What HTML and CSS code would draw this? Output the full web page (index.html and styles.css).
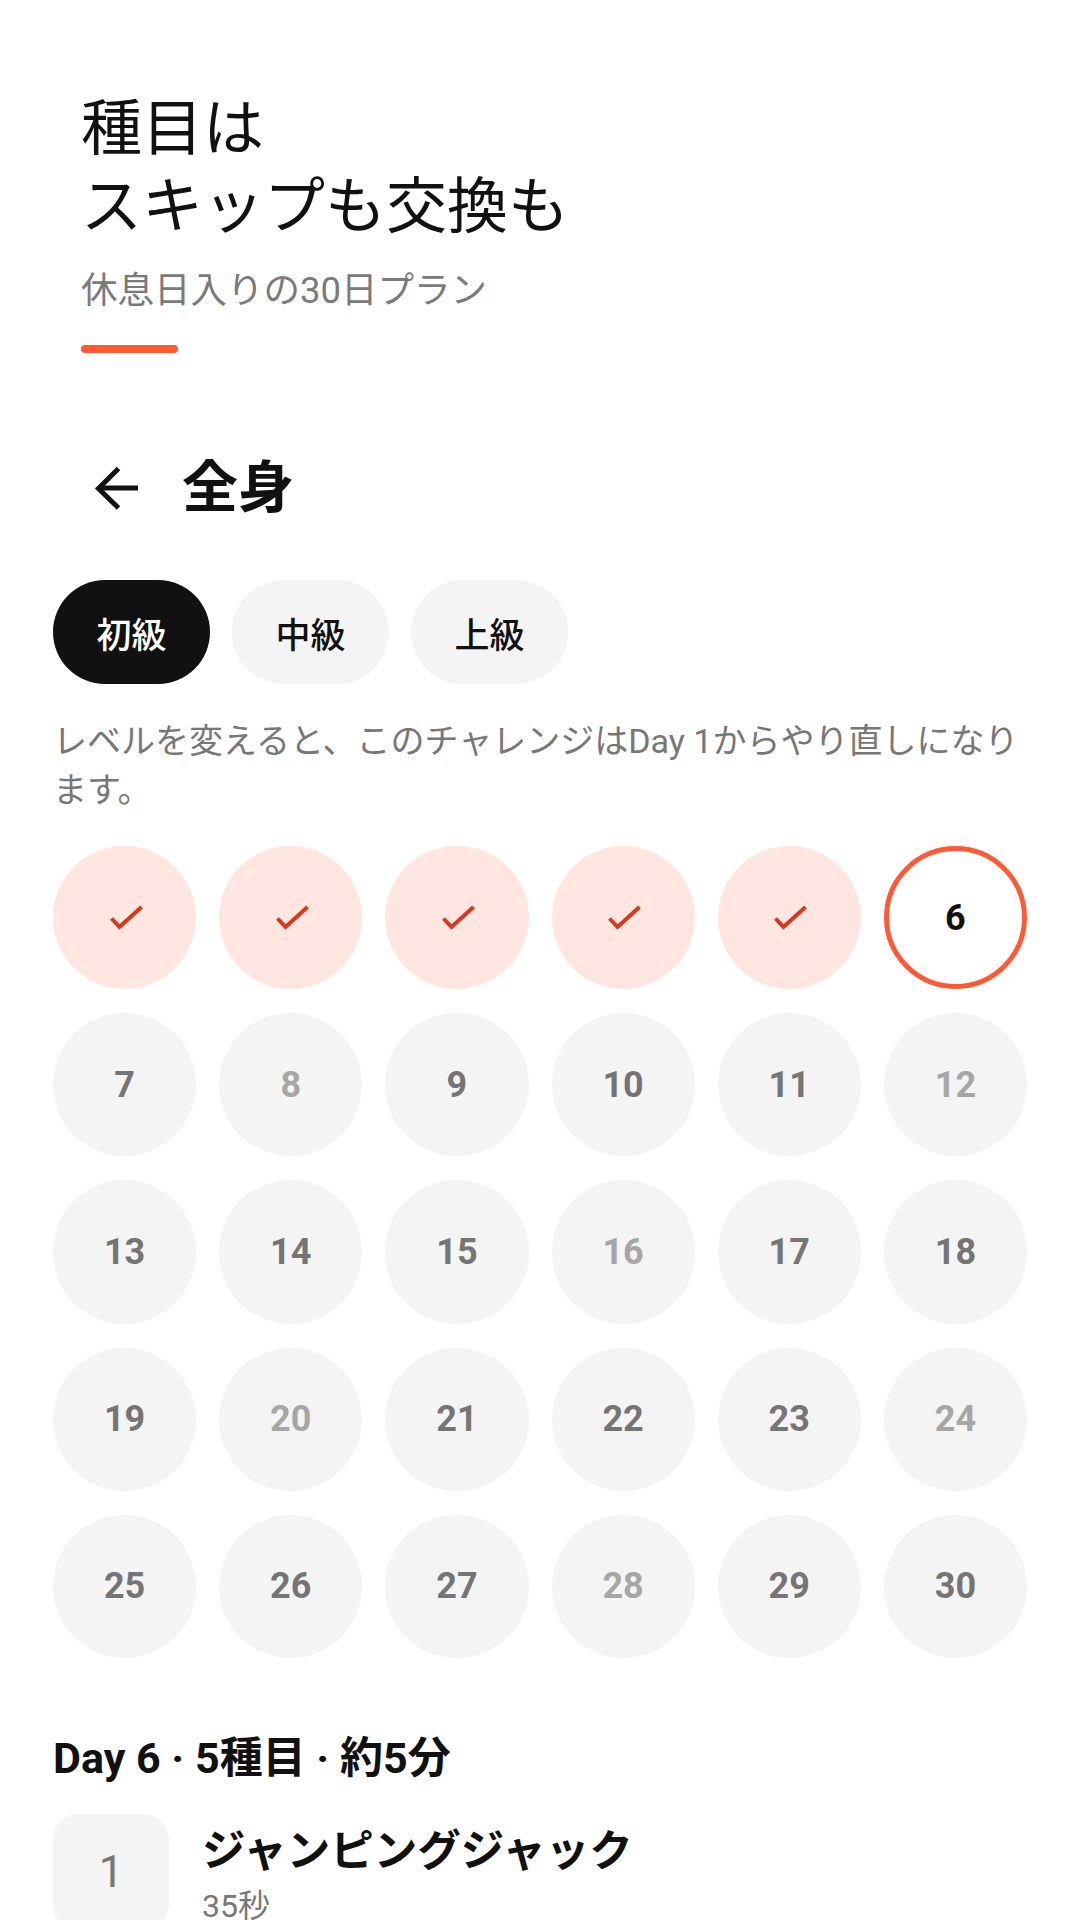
FILE: index.html
```html
<!DOCTYPE html>
<html lang="ja">
<head>
  <meta charset="UTF-8" />
  <meta name="viewport" content="width=device-width, initial-scale=1.0"/>
  <title>全身 30日チャレンジ</title>
  <link rel="stylesheet" href="styles.css">
</head>
<body>

  <header class="hero">
    <h1 class="hero-title">種目は<br>スキップも交換も</h1>
    <p class="hero-sub">休息日入りの30日プラン</p>
    <div class="hero-bar"></div>
  </header>

  <main class="content">
    <div class="topbar">
      <button class="back" aria-label="戻る">
        <svg width="48" height="48" viewBox="0 0 48 48" fill="none" stroke="#111" stroke-width="5">
          <path d="M5 24H45" />
          <path d="M25.5 4.5L5.5 24.5L25.5 44" />
        </svg>
      </button>
      <h2 class="topbar-title">全身</h2>
    </div>

    <div class="levels">
      <button class="chip active">初級</button>
      <button class="chip">中級</button>
      <button class="chip">上級</button>
    </div>

    <p class="note">レベルを変えると、このチャレンジはDay 1からやり直しになります。</p>

    <div class="days">
      <div class="day done"><svg width="40" height="32" viewBox="0 0 40 32"><polyline points="6.5,16.5 14.5,25 36.5,5" /></svg></div>
      <div class="day done"><svg width="40" height="32" viewBox="0 0 40 32"><polyline points="6.5,16.5 14.5,25 36.5,5" /></svg></div>
      <div class="day done"><svg width="40" height="32" viewBox="0 0 40 32"><polyline points="6.5,16.5 14.5,25 36.5,5" /></svg></div>
      <div class="day done"><svg width="40" height="32" viewBox="0 0 40 32"><polyline points="6.5,16.5 14.5,25 36.5,5" /></svg></div>
      <div class="day done"><svg width="40" height="32" viewBox="0 0 40 32"><polyline points="6.5,16.5 14.5,25 36.5,5" /></svg></div>
      <div class="day current">6</div>

      <div class="day">7</div>
      <div class="day rest">8</div>
      <div class="day">9</div>
      <div class="day">10</div>
      <div class="day">11</div>
      <div class="day rest">12</div>

      <div class="day">13</div>
      <div class="day">14</div>
      <div class="day">15</div>
      <div class="day rest">16</div>
      <div class="day">17</div>
      <div class="day">18</div>

      <div class="day">19</div>
      <div class="day rest">20</div>
      <div class="day">21</div>
      <div class="day">22</div>
      <div class="day">23</div>
      <div class="day rest">24</div>

      <div class="day">25</div>
      <div class="day">26</div>
      <div class="day">27</div>
      <div class="day rest">28</div>
      <div class="day">29</div>
      <div class="day">30</div>
    </div>

    <h3 class="plan-title">Day 6 · 5種目 · 約5分</h3>

    <ul class="exercises">
      <li class="exercise">
        <div class="exercise-num">1</div>
        <div class="exercise-info">
          <div class="exercise-name">ジャンピングジャック</div>
          <div class="exercise-time">35秒</div>
        </div>
      </li>
    </ul>
  </main>

</body>
</html>
```

FILE: styles.css
```css
:root {
  --text: #111;
  --muted: #777;
  --faint: #a6a6a6;
  --surface: #f4f4f4;
  --accent: #ff5a36;
  --done-bg: #ffe6e0;
  --done-mark: #d8391e;
}

* {
  box-sizing: border-box;
}

body {
  margin: 0;
  background: #fff;
  color: var(--text);
  font-family: Roboto, "Noto Sans CJK JP", sans-serif;
  overflow: hidden;
}

.hero {
  padding: 85px 81px 0;
}

.hero-title {
  margin: 0;
  font-size: 61px;
  line-height: 78px;
  font-weight: 400;
  font-family: "Noto Sans CJK JP", sans-serif;
}

.hero-sub {
  margin: 26px 0 0;
  font-size: 36.5px;
  line-height: 48px;
  color: #7a7a7a;
}

.hero-bar {
  width: 97px;
  height: 8px;
  margin-top: 30px;
  border-radius: 4px;
  background: var(--accent);
}

.content {
  padding: 0 53px;
}

.topbar {
  display: flex;
  align-items: center;
  gap: 29px;
  height: 72px;
  margin-top: 99px;
  padding-left: 28px;
}

.back {
  display: flex;
  align-items: center;
  justify-content: center;
  width: 72px;
  height: 72px;
  padding: 0;
  border: none;
  background: none;
}

.topbar-title {
  margin: 0;
  font-size: 56px;
  line-height: 72px;
  font-weight: 700;
}

.levels {
  display: flex;
  gap: 22px;
  margin-top: 56px;
}

.chip {
  height: 104px;
  padding: 0 43.5px;
  border: none;
  border-radius: 52px;
  background: var(--surface);
  color: var(--text);
  font-family: "Noto Sans CJK JP", sans-serif;
  font-size: 35px;
  font-weight: 500;
}

.chip.active {
  background: #111;
  color: #fff;
}

.note {
  margin: 33px 0 0;
  font-size: 34px;
  line-height: 49px;
  color: var(--muted);
}

.days {
  display: grid;
  grid-template-columns: repeat(6, 1fr);
  gap: 24px 23px;
  margin-top: 31px;
}

.day {
  display: flex;
  align-items: center;
  justify-content: center;
  aspect-ratio: 1;
  border-radius: 50%;
  background: var(--surface);
  color: #757575;
  font-size: 36px;
  font-weight: 700;
}

.day.rest {
  color: var(--faint);
}

.day.done {
  background: var(--done-bg);
}

.day.done polyline {
  fill: none;
  stroke: var(--done-mark);
  stroke-width: 4;
}

.day.current {
  background: #fff;
  border: 5px solid var(--accent);
  color: #111;
}

.plan-title {
  margin: 72px 0 0;
  font-size: 43px;
  line-height: 56px;
  font-weight: 700;
}

.exercises {
  list-style: none;
  margin: 28px 0 0;
  padding: 0;
}

.exercise {
  display: flex;
  gap: 33px;
}

.exercise-num {
  display: flex;
  align-items: center;
  justify-content: center;
  flex: none;
  width: 116px;
  height: 116px;
  border-radius: 26px;
  background: var(--surface);
  color: var(--muted);
  font-size: 44px;
}

.exercise-info {
  padding-top: 10px;
}

.exercise-name {
  font-size: 43.5px;
  line-height: 56px;
  font-weight: 700;
}

.exercise-time {
  margin-top: 5px;
  font-size: 32px;
  line-height: 42px;
  color: var(--muted);
}
```
